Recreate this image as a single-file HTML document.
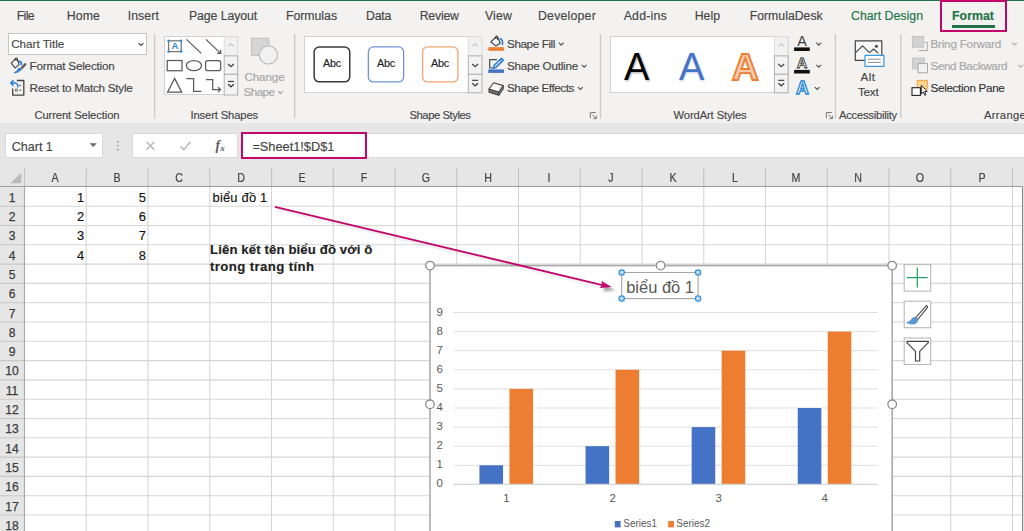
<!DOCTYPE html>
<html lang="vi"><head><meta charset="utf-8"><title>Excel - Chart title linked to cell</title>
<style>
html,body{margin:0;padding:0;}
body{width:1024px;height:531px;overflow:hidden;background:#f3f2f1;font-family:"Liberation Sans", sans-serif;}
#app{position:relative;width:1024px;height:531px;overflow:hidden;background:#f3f2f1;}
.t{position:absolute;white-space:nowrap;line-height:16px;height:16px;font-family:"Liberation Sans", sans-serif;-webkit-text-stroke:0.15px currentColor;}
.abs{position:absolute;}
svg{position:absolute;left:0;top:0;overflow:visible;}
</style></head><body><div id="app">
<div class="abs" style="left:0.00px;top:123.00px;width:1024.00px;height:63.50px;box-sizing:border-box;background:#e6e6e6;"></div>
<div class="abs" style="left:0.00px;top:121.00px;width:1024.00px;height:3.00px;box-sizing:border-box;background:linear-gradient(#f3f2f1,#efefef 45%,#e6e6e6);"></div>
<div class="abs" style="left:0.00px;top:0.00px;width:1024.00px;height:1.00px;box-sizing:border-box;background:#217346;"></div>
<div class="abs" style="left:5.00px;top:133.00px;width:97.70px;height:25.00px;box-sizing:border-box;background:#fff;border:1px solid #d9d9d9;"></div>
<div class="abs" style="left:132.20px;top:133.00px;width:105.60px;height:25.00px;box-sizing:border-box;background:#fff;border:1px solid #d9d9d9;"></div>
<div class="abs" style="left:241.00px;top:133.00px;width:783.00px;height:25.00px;box-sizing:border-box;background:#fff;border-top:1px solid #d9d9d9;border-bottom:1px solid #d9d9d9;"></div>
<div class="abs" style="left:241.40px;top:132.00px;width:125.40px;height:27.00px;box-sizing:border-box;background:#fff;border:2px solid #c4066b;"></div>
<div class="abs" style="left:940.10px;top:0.00px;width:66.70px;height:31.80px;box-sizing:border-box;border:2px solid #c4066b;"></div>
<div class="abs" style="left:952.00px;top:25.00px;width:42.80px;height:2.90px;box-sizing:border-box;background:#217346;"></div>
<div class="abs" style="left:8.20px;top:33.30px;width:139.00px;height:21.60px;box-sizing:border-box;background:#fff;border:1px solid #c6c6c6;"></div>
<div class="abs" style="left:164.40px;top:36.20px;width:73.80px;height:59.30px;box-sizing:border-box;background:#fff;border:1px solid #d2d2d2;"></div>
<div class="abs" style="left:304.20px;top:36.20px;width:178.30px;height:57.10px;box-sizing:border-box;background:#fff;border:1px solid #d2d2d2;"></div>
<div class="abs" style="left:610.20px;top:36.20px;width:178.40px;height:57.10px;box-sizing:border-box;background:#fff;border:1px solid #d2d2d2;"></div>
<svg width="1024" height="124" viewBox="0 0 1024 124"><path d="M154.6 34 V118.6" stroke="#cbcbcb" stroke-width="1.4" fill="none"/></svg>
<svg width="1024" height="124" viewBox="0 0 1024 124"><path d="M294.7 34 V118.6" stroke="#cbcbcb" stroke-width="1.4" fill="none"/></svg>
<svg width="1024" height="124" viewBox="0 0 1024 124"><path d="M600.5 34 V118.6" stroke="#cbcbcb" stroke-width="1.4" fill="none"/></svg>
<svg width="1024" height="124" viewBox="0 0 1024 124"><path d="M835.4 34 V118.6" stroke="#cbcbcb" stroke-width="1.4" fill="none"/></svg>
<svg width="1024" height="124" viewBox="0 0 1024 124"><path d="M900.8 34 V118.6" stroke="#cbcbcb" stroke-width="1.4" fill="none"/></svg>
<svg width="1024" height="190" viewBox="0 0 1024 190">
<path d="M138.60 43.10 L141.00 45.50 L143.40 43.10" fill="none" stroke="#444" stroke-width="1.2"/>
<g fill="none" stroke-linejoin="round" stroke-linecap="round"><path d="M11.3 63.4 L14.9 59.1 L17.9 60.3 L19.1 64.6 L15.2 67.9 Z" stroke="#444" stroke-width="1.2" fill="#fbfbfb"/><path d="M15.5 60 V58.4 Q16.4 57.5 17.3 58.4 V61" stroke="#444" stroke-width="1.1"/><path d="M19.5 61.2 Q22 62 21.4 64.6" stroke="#2b7cd3" stroke-width="1.7"/><path d="M25.3 64.3 L21.2 68.6" stroke="#555" stroke-width="2.3"/><path d="M21.4 68.4 L20.2 69.7" stroke="#8a8a8a" stroke-width="2.3"/><path d="M20.9 69.6 Q19.4 72.4 14.1 72.9 Q17.6 71.6 18.6 68.6 Z" fill="#2b7cd3" stroke="#2b7cd3" stroke-width="1"/></g>
<g fill="none" stroke-linejoin="round"><path d="M16.8 80.5 H23.8 V95.2 H12.7 V88.4" stroke="#444" stroke-width="1.3"/><rect x="15.5" y="89.1" width="1.9" height="2.1" stroke="#666" stroke-width="0.9"/><path d="M19 85.3 H21.3 M19 90.2 H21.3" stroke="#666" stroke-width="1"/><path d="M11 83.1 H15 Q18 83.3 18 87.6" stroke="#2b7cd3" stroke-width="1.5"/><path d="M13.5 80.4 L10.8 83.1 L13.5 85.8" stroke="#2b7cd3" stroke-width="1.5"/></g>
<g fill="none" stroke="#5a5a5a" stroke-width="1.25"><rect x="168.6" y="40.8" width="12.6" height="10.8" stroke="#7a7a7a" stroke-width="1.3"/><path d="M186.4 39.4 L201.3 53.4"/><path d="M205.9 39.4 L220.4 53.1"/><path d="M217.2 53.4 H220.7 V49.8" /><rect x="167.2" y="60.5" width="14.8" height="10.2"/><ellipse cx="193.9" cy="65.6" rx="7.6" ry="5.1"/><rect x="205.6" y="60.5" width="15.1" height="10.2" rx="2.2"/><path d="M174.6 78.4 L181.7 92.1 H167.6 Z"/><path d="M186.4 78.6 H193.6 V91.3 H201.4"/><path d="M205.9 79.6 H212.7 V89.6 H220"/><path d="M218 87.2 L220.6 89.6 L218 92"/></g>
<circle cx="168.6" cy="40.8" r="1.25" fill="#2b8ad8"/>
<circle cx="181.2" cy="40.8" r="1.25" fill="#2b8ad8"/>
<circle cx="168.6" cy="51.6" r="1.25" fill="#2b8ad8"/>
<circle cx="181.2" cy="51.6" r="1.25" fill="#2b8ad8"/>
<text x="174.9" y="49.3" font-family="Liberation Sans, sans-serif" font-size="9.6" font-weight="700" fill="#2b8ad8" text-anchor="middle">A</text>
<rect x="224.20" y="36.70" width="13.50" height="19.20" fill="#f1f1f1" stroke="#dcdcdc" stroke-width="1"/>
<rect x="224.20" y="55.90" width="13.50" height="18.40" fill="#f3f3f3" stroke="#b2b2b2" stroke-width="1"/>
<rect x="224.20" y="74.30" width="13.50" height="20.70" fill="#f3f3f3" stroke="#b2b2b2" stroke-width="1"/>
<path d="M228.05 46.20 L230.95 43.70 L233.85 46.20" fill="none" stroke="#c6c6c6" stroke-width="1.2"/>
<path d="M228.05 64.10 L230.95 66.70 L233.85 64.10" fill="none" stroke="#444" stroke-width="1.35"/>
<path d="M227.95 81.45 H233.95" stroke="#444" stroke-width="1.2"/>
<path d="M228.05 84.25 L230.95 86.85 L233.85 84.25" fill="none" stroke="#444" stroke-width="1.35"/>
<rect x="251.4" y="38.3" width="17.6" height="17.3" fill="#d6d6d6" stroke="#c0c0c0" stroke-width="1"/>
<circle cx="268.4" cy="54.9" r="9.1" fill="#f1f1f1" stroke="#bdbdbd" stroke-width="1.2"/>
<path d="M278.10 91.25 L280.40 93.55 L282.70 91.25" fill="none" stroke="#a6a6a6" stroke-width="1.2"/>
<rect x="314.15" y="47.05" width="35.60" height="34.80" rx="5" fill="#fff" stroke="#3a3a3a" stroke-width="1.5"/>
<rect x="368.35" y="46.95" width="35.30" height="35.00" rx="5" fill="#fff" stroke="#6e95d8" stroke-width="1.3"/>
<rect x="422.55" y="46.95" width="35.40" height="35.00" rx="5" fill="#fff" stroke="#f0a570" stroke-width="1.3"/>
<rect x="468.30" y="36.70" width="13.70" height="19.20" fill="#f1f1f1" stroke="#dcdcdc" stroke-width="1"/>
<rect x="468.30" y="55.90" width="13.70" height="18.40" fill="#f3f3f3" stroke="#b2b2b2" stroke-width="1"/>
<rect x="468.30" y="74.30" width="13.70" height="18.50" fill="#f3f3f3" stroke="#b2b2b2" stroke-width="1"/>
<path d="M472.25 46.20 L475.15 43.70 L478.05 46.20" fill="none" stroke="#c6c6c6" stroke-width="1.2"/>
<path d="M472.25 64.10 L475.15 66.70 L478.05 64.10" fill="none" stroke="#444" stroke-width="1.35"/>
<path d="M472.15 80.35 H478.15" stroke="#444" stroke-width="1.2"/>
<path d="M472.25 83.15 L475.15 85.75 L478.05 83.15" fill="none" stroke="#444" stroke-width="1.35"/>
<rect x="488.3" y="47.2" width="15.6" height="3.6" fill="#ed7d31"/>
<g fill="none" stroke-linejoin="round" stroke-linecap="round"><path d="M490.9 42 L495.2 37.7 L498.3 38.4 L500.1 43.2 L495.8 45.9 Z" stroke="#444" stroke-width="1.2" fill="#fbfbfb"/><path d="M495.7 38.4 V36.6 Q496.7 35.6 497.7 36.6 V39.4" stroke="#444" stroke-width="1.1"/><path d="M500.4 38.8 Q503.2 40.2 502.4 44.4" stroke="#2b7cd3" stroke-width="1.6"/></g>
<path d="M558.80 42.70 L561.20 45.10 L563.60 42.70" fill="none" stroke="#555" stroke-width="1.2"/>
<rect x="488.3" y="69.4" width="15.6" height="3.5" fill="#4472c4"/>
<g fill="none" stroke-linejoin="round" stroke-linecap="round"><path d="M496.6 59.7 H489.7 V68 H492.6" stroke="#444" stroke-width="1.2"/><path d="M501.4 58.2 L503.3 60.1 L496.2 67.2 L493.2 68.2 L494.2 65.2 Z" stroke="#2b7cd3" stroke-width="1.5" fill="#cfe3f7"/><path d="M499.7 59.9 L501.6 61.8" stroke="#2b7cd3" stroke-width="1"/></g>
<path d="M581.80 64.80 L584.20 67.20 L586.60 64.80" fill="none" stroke="#555" stroke-width="1.2"/>
<g stroke-linejoin="round"><path d="M489 89 L498.8 92 V95.3 L489 92.3 Z" fill="#6f6f6f" stroke="#444" stroke-width="1.1"/><path d="M498.8 92 L503.2 85.6 V88.9 L498.8 95.3 Z" fill="#a8a8a8" stroke="#444" stroke-width="1.1"/><path d="M489 89 L493.6 82.7 L503.2 85.6 L498.8 92 Z" fill="#fbfbfb" stroke="#444" stroke-width="1.1"/></g>
<path d="M578.00 87.10 L580.40 89.50 L582.80 87.10" fill="none" stroke="#555" stroke-width="1.2"/>
<path d="M595.80 112.60 H590.30 V118.10" fill="none" stroke="#777" stroke-width="1"/><path d="M592.50 114.80 L596.30 118.60 M596.30 115.60 V118.60 H593.30" fill="none" stroke="#777" stroke-width="1"/>
<defs><filter id="ws" x="-20%" y="-20%" width="140%" height="150%"><feGaussianBlur stdDeviation="0.9"/></filter></defs>
<text x="637.6" y="81.2" font-family="Liberation Sans, sans-serif" font-size="38" fill="#000" opacity="0.35" text-anchor="middle" filter="url(#ws)">A</text>
<text x="636.8" y="79.9" font-family="Liberation Sans, sans-serif" font-size="38" fill="#000" text-anchor="middle">A</text>
<text x="692.2" y="81.2" font-family="Liberation Sans, sans-serif" font-size="38" fill="#4472c4" opacity="0.35" text-anchor="middle" filter="url(#ws)">A</text>
<text x="691.6" y="79.9" font-family="Liberation Sans, sans-serif" font-size="38" fill="#4472c4" text-anchor="middle">A</text>
<text x="745.4" y="79.8" font-family="Liberation Sans, sans-serif" font-size="37.5" font-weight="700" fill="#f8cbad" stroke="#ed7d31" stroke-width="1.8" text-anchor="middle">A</text>
<rect x="774.40" y="36.70" width="13.70" height="19.20" fill="#f1f1f1" stroke="#dcdcdc" stroke-width="1"/>
<rect x="774.40" y="55.90" width="13.70" height="18.40" fill="#f3f3f3" stroke="#b2b2b2" stroke-width="1"/>
<rect x="774.40" y="74.30" width="13.70" height="18.50" fill="#f3f3f3" stroke="#b2b2b2" stroke-width="1"/>
<path d="M778.35 46.20 L781.25 43.70 L784.15 46.20" fill="none" stroke="#c6c6c6" stroke-width="1.2"/>
<path d="M778.35 64.10 L781.25 66.70 L784.15 64.10" fill="none" stroke="#444" stroke-width="1.35"/>
<path d="M778.25 80.35 H784.25" stroke="#444" stroke-width="1.2"/>
<path d="M778.35 83.15 L781.25 85.75 L784.15 83.15" fill="none" stroke="#444" stroke-width="1.35"/>
<rect x="794.1" y="47.4" width="15.7" height="3.6" fill="#111"/>
<text x="802.1" y="46.0" font-family="Liberation Sans, sans-serif" font-size="14.3" fill="#3c3c3c" text-anchor="middle">A</text>
<path d="M816.40 42.70 L818.80 45.10 L821.20 42.70" fill="none" stroke="#555" stroke-width="1.2"/>
<rect x="794.1" y="69.9" width="15.7" height="3.6" fill="#111"/>
<text x="802.1" y="68.3" font-family="Liberation Sans, sans-serif" font-size="14.6" font-weight="700" fill="#f8f8f8" stroke="#333" stroke-width="0.85" text-anchor="middle">A</text>
<path d="M816.40 64.80 L818.80 67.20 L821.20 64.80" fill="none" stroke="#555" stroke-width="1.2"/>
<text x="802.3" y="93.6" font-family="Liberation Sans, sans-serif" font-size="17.8" font-weight="700" fill="#fff" stroke="#2b8ad8" stroke-width="1.35" text-anchor="middle">A</text>
<path d="M814.80 87.10 L817.20 89.50 L819.60 87.10" fill="none" stroke="#555" stroke-width="1.2"/>
<path d="M831.90 112.60 H826.40 V118.10" fill="none" stroke="#777" stroke-width="1"/><path d="M828.60 114.80 L832.40 118.60 M832.40 115.60 V118.60 H829.40" fill="none" stroke="#777" stroke-width="1"/>
<g fill="none" stroke-linejoin="round"><rect x="855.3" y="40.8" width="26.5" height="19.6" stroke="#444" stroke-width="1.2" fill="#f7f7f7"/><path d="M855.6 52.6 L862.6 45.8 L869.4 52.6 L873.6 49 L878.4 53.4" stroke="#444" stroke-width="1.1"/><circle cx="876.4" cy="46.2" r="1.5" fill="#444"/><rect x="865" y="55.4" width="18.9" height="11" fill="#fff" stroke="#3a96dd" stroke-width="1.2"/><path d="M867.8 59.2 H880.8 M867.8 62.4 H880.8" stroke="#8a8a8a" stroke-width="1"/></g>
<g stroke-linejoin="miter"><path d="M918.6 50.6 H927.4 V42.4 H924.6" fill="none" stroke="#a8a8a8" stroke-width="1"/><rect x="912.4" y="36.4" width="11.2" height="10.8" fill="#d2d2d2" stroke="#c4c4c4" stroke-width="1"/><rect x="912.4" y="58.1" width="11.9" height="10.8" fill="#d2d2d2" stroke="#c4c4c4" stroke-width="1"/><rect x="918.1" y="63.6" width="9.4" height="9.2" fill="#f1f1f1" stroke="#a8a8a8" stroke-width="1"/><rect x="917.3" y="80.4" width="10" height="8.6" fill="#ffd591" stroke="#f2a33a" stroke-width="1"/><rect x="912" y="87.7" width="8.4" height="7.7" fill="#fff" stroke="#222" stroke-width="1.1"/><path d="M921.3 85.4 V94 L923.3 92.1 L924.8 95.3 L926 94.7 L924.6 91.6 L927.2 91.4 Z" fill="#fff" stroke="#111" stroke-width="0.9"/></g>
<path d="M1012.10 42.60 L1014.50 45.00 L1016.90 42.60" fill="none" stroke="#b0b0b0" stroke-width="1.2"/>
<path d="M1018.20 64.80 L1020.60 67.20 L1023.00 64.80" fill="none" stroke="#b0b0b0" stroke-width="1.2"/>
<path d="M89.5 143.2 H96.9 L93.2 147 Z" fill="#6a6a6a"/>
<circle cx="117.9" cy="141.6" r="0.9" fill="#949494"/>
<circle cx="117.9" cy="145.6" r="0.9" fill="#949494"/>
<circle cx="117.9" cy="149.6" r="0.9" fill="#949494"/>
<path d="M146.6 142 L154.2 149.6 M154.2 142 L146.6 149.6" stroke="#bcbcbc" stroke-width="1.6" fill="none"/>
<path d="M180.6 146.4 L183.8 149.8 L190.4 141.8" stroke="#bcbcbc" stroke-width="1.7" fill="none"/>
<text x="215.6" y="150.4" font-family="Liberation Serif, serif" font-size="13.6" font-style="italic" font-weight="700" fill="#5a5a5a">f</text>
<text x="220.2" y="151.2" font-family="Liberation Serif, serif" font-size="9" font-style="italic" font-weight="700" fill="#5a5a5a">x</text>
</svg>
<svg width="1024" height="531" viewBox="0 0 1024 531">
<rect x="24.5" y="186.5" width="998.0" height="344.5" fill="#fff"/>
<rect x="1022.5" y="168" width="1.5" height="363" fill="#e6e6e6"/>
<path d="M1022.5 186 V531" stroke="#8a8a8a" stroke-width="1.1"/>
<rect x="0" y="186.5" width="24.5" height="344.5" fill="#e6e6e6"/>
<path d="M24.5 206.20 H1022 M24.5 225.50 H1022 M24.5 244.80 H1022 M24.5 264.10 H1022 M24.5 283.40 H1022 M24.5 302.70 H1022 M24.5 322.00 H1022 M24.5 341.30 H1022 M24.5 360.60 H1022 M24.5 379.90 H1022 M24.5 399.20 H1022 M24.5 418.50 H1022 M24.5 437.80 H1022 M24.5 457.10 H1022 M24.5 476.40 H1022 M24.5 495.70 H1022 M24.5 515.00 H1022 M24.5 534.30 H1022 M86.25 186.5 V531 M148.00 186.5 V531 M209.75 186.5 V531 M271.50 186.5 V531 M333.25 186.5 V531 M395.00 186.5 V531 M456.75 186.5 V531 M518.50 186.5 V531 M580.25 186.5 V531 M642.00 186.5 V531 M703.75 186.5 V531 M765.50 186.5 V531 M827.25 186.5 V531 M889.00 186.5 V531 M950.75 186.5 V531 M1012.50 186.5 V531" stroke="#d6d6d6" stroke-width="1.1" fill="none"/>
<path d="M24.50 168.2 V186.5 M86.25 168.2 V186.5 M148.00 168.2 V186.5 M209.75 168.2 V186.5 M271.50 168.2 V186.5 M333.25 168.2 V186.5 M395.00 168.2 V186.5 M456.75 168.2 V186.5 M518.50 168.2 V186.5 M580.25 168.2 V186.5 M642.00 168.2 V186.5 M703.75 168.2 V186.5 M765.50 168.2 V186.5 M827.25 168.2 V186.5 M889.00 168.2 V186.5 M950.75 168.2 V186.5 M1012.50 168.2 V186.5" stroke="#c2c2c2" stroke-width="1.1" fill="none"/>
<path d="M0 206.20 H24.5 M0 225.50 H24.5 M0 244.80 H24.5 M0 264.10 H24.5 M0 283.40 H24.5 M0 302.70 H24.5 M0 322.00 H24.5 M0 341.30 H24.5 M0 360.60 H24.5 M0 379.90 H24.5 M0 399.20 H24.5 M0 418.50 H24.5 M0 437.80 H24.5 M0 457.10 H24.5 M0 476.40 H24.5 M0 495.70 H24.5 M0 515.00 H24.5 M0 534.30 H24.5" stroke="#c8c8c8" stroke-width="1.1" fill="none"/>
<path d="M0 186.5 H1023" stroke="#9c9c9c" stroke-width="1.2" fill="none"/>
<path d="M24.5 186.5 V531" stroke="#a9a9a9" stroke-width="1.2" fill="none"/>
<path d="M21.3 172.8 V183.2 H10.4 Z" fill="#b9b9b9"/>
</svg>
<span class="t" style="left:16.70px;top:7.94px;font-size:12.3px;color:#444;letter-spacing:-0.632px;">File</span>
<span class="t" style="left:66.70px;top:7.94px;font-size:12.3px;color:#444;letter-spacing:0.122px;">Home</span>
<span class="t" style="left:127.70px;top:7.94px;font-size:12.3px;color:#444;letter-spacing:0.089px;">Insert</span>
<span class="t" style="left:189.00px;top:7.94px;font-size:12.3px;color:#444;letter-spacing:-0.097px;">Page Layout</span>
<span class="t" style="left:286.00px;top:7.94px;font-size:12.3px;color:#444;letter-spacing:-0.031px;">Formulas</span>
<span class="t" style="left:366.00px;top:7.94px;font-size:12.3px;color:#444;letter-spacing:-0.246px;">Data</span>
<span class="t" style="left:419.70px;top:7.94px;font-size:12.3px;color:#444;letter-spacing:-0.221px;">Review</span>
<span class="t" style="left:485.00px;top:7.94px;font-size:12.3px;color:#444;letter-spacing:0.141px;">View</span>
<span class="t" style="left:538.00px;top:7.94px;font-size:12.3px;color:#444;letter-spacing:0.215px;">Developer</span>
<span class="t" style="left:623.70px;top:7.94px;font-size:12.3px;color:#444;letter-spacing:0.228px;">Add-ins</span>
<span class="t" style="left:694.70px;top:7.94px;font-size:12.3px;color:#444;letter-spacing:0.001px;">Help</span>
<span class="t" style="left:749.70px;top:7.94px;font-size:12.3px;color:#444;letter-spacing:-0.011px;">FormulaDesk</span>
<span class="t" style="left:851.00px;top:7.94px;font-size:12.3px;color:#217346;letter-spacing:0.020px;">Chart Design</span>
<span class="t" style="left:952.00px;top:7.94px;font-size:12.3px;color:#217346;font-weight:700;letter-spacing:0.052px;">Format</span>
<span class="t" style="left:11.20px;top:35.85px;font-size:11.7px;color:#444;letter-spacing:-0.024px;">Chart Title</span>
<span class="t" style="left:29.60px;top:57.85px;font-size:11.7px;color:#444;letter-spacing:-0.215px;">Format Selection</span>
<span class="t" style="left:29.60px;top:79.85px;font-size:11.7px;color:#444;letter-spacing:-0.247px;">Reset to Match Style</span>
<span class="t" style="left:34.40px;top:106.72px;font-size:11.2px;color:#444;letter-spacing:-0.079px;">Current Selection</span>
<span class="t" style="left:190.50px;top:106.72px;font-size:11.2px;color:#444;letter-spacing:-0.119px;">Insert Shapes</span>
<span class="t" style="left:244.50px;top:68.75px;font-size:11.7px;color:#a6a6a6;letter-spacing:-0.159px;">Change</span>
<span class="t" style="left:243.50px;top:84.25px;font-size:11.7px;color:#a6a6a6;letter-spacing:-0.559px;">Shape</span>
<span class="t" style="left:323.00px;top:55.26px;font-size:10.8px;color:#222;letter-spacing:-0.203px;">Abc</span>
<span class="t" style="left:377.00px;top:55.26px;font-size:10.8px;color:#222;letter-spacing:-0.203px;">Abc</span>
<span class="t" style="left:431.00px;top:55.26px;font-size:10.8px;color:#222;letter-spacing:-0.203px;">Abc</span>
<span class="t" style="left:507.00px;top:35.85px;font-size:11.7px;color:#444;letter-spacing:-0.398px;">Shape Fill</span>
<span class="t" style="left:507.00px;top:57.85px;font-size:11.7px;color:#444;letter-spacing:-0.237px;">Shape Outline</span>
<span class="t" style="left:507.00px;top:79.85px;font-size:11.7px;color:#444;letter-spacing:-0.428px;">Shape Effects</span>
<span class="t" style="left:409.50px;top:106.72px;font-size:11.2px;color:#444;letter-spacing:-0.411px;">Shape Styles</span>
<span class="t" style="left:673.50px;top:106.72px;font-size:11.2px;color:#444;letter-spacing:-0.100px;">WordArt Styles</span>
<span class="t" style="left:860.50px;top:68.75px;font-size:11.7px;color:#444;letter-spacing:0.453px;">Alt</span>
<span class="t" style="left:858.00px;top:84.25px;font-size:11.7px;color:#444;letter-spacing:-0.234px;">Text</span>
<span class="t" style="left:839.00px;top:106.72px;font-size:11.2px;color:#444;letter-spacing:-0.226px;">Accessibility</span>
<span class="t" style="left:930.50px;top:35.85px;font-size:11.7px;color:#a6a6a6;letter-spacing:-0.224px;">Bring Forward</span>
<span class="t" style="left:930.50px;top:57.85px;font-size:11.7px;color:#a6a6a6;letter-spacing:-0.412px;">Send Backward</span>
<span class="t" style="left:930.50px;top:79.85px;font-size:11.7px;color:#333;letter-spacing:-0.330px;">Selection Pane</span>
<span class="t" style="left:984.00px;top:106.72px;font-size:11.2px;color:#444;letter-spacing:0.312px;">Arrange</span>
<span class="t" style="left:11.80px;top:138.63px;font-size:12.6px;color:#444;letter-spacing:-0.045px;">Chart 1</span>
<span class="t" style="left:252.40px;top:138.86px;font-size:12.8px;color:#444;letter-spacing:-0.016px;">=Sheet1!$D$1</span>
<span class="t" style="left:45.38px;width:20.00px;text-align:center;top:169.81px;font-size:12.1px;color:#444;transform:scaleX(.88);-webkit-text-stroke:0.2px #444;">A</span>
<span class="t" style="left:107.12px;width:20.00px;text-align:center;top:169.81px;font-size:12.1px;color:#444;transform:scaleX(.88);-webkit-text-stroke:0.2px #444;">B</span>
<span class="t" style="left:168.88px;width:20.00px;text-align:center;top:169.81px;font-size:12.1px;color:#444;transform:scaleX(.88);-webkit-text-stroke:0.2px #444;">C</span>
<span class="t" style="left:230.62px;width:20.00px;text-align:center;top:169.81px;font-size:12.1px;color:#444;transform:scaleX(.88);-webkit-text-stroke:0.2px #444;">D</span>
<span class="t" style="left:292.38px;width:20.00px;text-align:center;top:169.81px;font-size:12.1px;color:#444;transform:scaleX(.88);-webkit-text-stroke:0.2px #444;">E</span>
<span class="t" style="left:354.12px;width:20.00px;text-align:center;top:169.81px;font-size:12.1px;color:#444;transform:scaleX(.88);-webkit-text-stroke:0.2px #444;">F</span>
<span class="t" style="left:415.88px;width:20.00px;text-align:center;top:169.81px;font-size:12.1px;color:#444;transform:scaleX(.88);-webkit-text-stroke:0.2px #444;">G</span>
<span class="t" style="left:477.62px;width:20.00px;text-align:center;top:169.81px;font-size:12.1px;color:#444;transform:scaleX(.88);-webkit-text-stroke:0.2px #444;">H</span>
<span class="t" style="left:539.38px;width:20.00px;text-align:center;top:169.81px;font-size:12.1px;color:#444;transform:scaleX(.88);-webkit-text-stroke:0.2px #444;">I</span>
<span class="t" style="left:601.12px;width:20.00px;text-align:center;top:169.81px;font-size:12.1px;color:#444;transform:scaleX(.88);-webkit-text-stroke:0.2px #444;">J</span>
<span class="t" style="left:662.88px;width:20.00px;text-align:center;top:169.81px;font-size:12.1px;color:#444;transform:scaleX(.88);-webkit-text-stroke:0.2px #444;">K</span>
<span class="t" style="left:724.62px;width:20.00px;text-align:center;top:169.81px;font-size:12.1px;color:#444;transform:scaleX(.88);-webkit-text-stroke:0.2px #444;">L</span>
<span class="t" style="left:786.38px;width:20.00px;text-align:center;top:169.81px;font-size:12.1px;color:#444;transform:scaleX(.88);-webkit-text-stroke:0.2px #444;">M</span>
<span class="t" style="left:848.12px;width:20.00px;text-align:center;top:169.81px;font-size:12.1px;color:#444;transform:scaleX(.88);-webkit-text-stroke:0.2px #444;">N</span>
<span class="t" style="left:909.88px;width:20.00px;text-align:center;top:169.81px;font-size:12.1px;color:#444;transform:scaleX(.88);-webkit-text-stroke:0.2px #444;">O</span>
<span class="t" style="left:971.62px;width:20.00px;text-align:center;top:169.81px;font-size:12.1px;color:#444;transform:scaleX(.88);-webkit-text-stroke:0.2px #444;">P</span>
<span class="t" style="left:1.50px;width:21.00px;text-align:center;top:189.71px;font-size:12.1px;color:#3c3c3c;-webkit-text-stroke:0.25px #3c3c3c;">1</span>
<span class="t" style="left:1.50px;width:21.00px;text-align:center;top:209.01px;font-size:12.1px;color:#3c3c3c;-webkit-text-stroke:0.25px #3c3c3c;">2</span>
<span class="t" style="left:1.50px;width:21.00px;text-align:center;top:228.31px;font-size:12.1px;color:#3c3c3c;-webkit-text-stroke:0.25px #3c3c3c;">3</span>
<span class="t" style="left:1.50px;width:21.00px;text-align:center;top:247.61px;font-size:12.1px;color:#3c3c3c;-webkit-text-stroke:0.25px #3c3c3c;">4</span>
<span class="t" style="left:1.50px;width:21.00px;text-align:center;top:266.91px;font-size:12.1px;color:#3c3c3c;-webkit-text-stroke:0.25px #3c3c3c;">5</span>
<span class="t" style="left:1.50px;width:21.00px;text-align:center;top:286.21px;font-size:12.1px;color:#3c3c3c;-webkit-text-stroke:0.25px #3c3c3c;">6</span>
<span class="t" style="left:1.50px;width:21.00px;text-align:center;top:305.51px;font-size:12.1px;color:#3c3c3c;-webkit-text-stroke:0.25px #3c3c3c;">7</span>
<span class="t" style="left:1.50px;width:21.00px;text-align:center;top:324.81px;font-size:12.1px;color:#3c3c3c;-webkit-text-stroke:0.25px #3c3c3c;">8</span>
<span class="t" style="left:1.50px;width:21.00px;text-align:center;top:344.11px;font-size:12.1px;color:#3c3c3c;-webkit-text-stroke:0.25px #3c3c3c;">9</span>
<span class="t" style="left:1.50px;width:21.00px;text-align:center;top:363.41px;font-size:12.1px;color:#3c3c3c;-webkit-text-stroke:0.25px #3c3c3c;">10</span>
<span class="t" style="left:1.50px;width:21.00px;text-align:center;top:382.71px;font-size:12.1px;color:#3c3c3c;-webkit-text-stroke:0.25px #3c3c3c;">11</span>
<span class="t" style="left:1.50px;width:21.00px;text-align:center;top:402.01px;font-size:12.1px;color:#3c3c3c;-webkit-text-stroke:0.25px #3c3c3c;">12</span>
<span class="t" style="left:1.50px;width:21.00px;text-align:center;top:421.31px;font-size:12.1px;color:#3c3c3c;-webkit-text-stroke:0.25px #3c3c3c;">13</span>
<span class="t" style="left:1.50px;width:21.00px;text-align:center;top:440.61px;font-size:12.1px;color:#3c3c3c;-webkit-text-stroke:0.25px #3c3c3c;">14</span>
<span class="t" style="left:1.50px;width:21.00px;text-align:center;top:459.91px;font-size:12.1px;color:#3c3c3c;-webkit-text-stroke:0.25px #3c3c3c;">15</span>
<span class="t" style="left:1.50px;width:21.00px;text-align:center;top:479.21px;font-size:12.1px;color:#3c3c3c;-webkit-text-stroke:0.25px #3c3c3c;">16</span>
<span class="t" style="left:1.50px;width:21.00px;text-align:center;top:498.51px;font-size:12.1px;color:#3c3c3c;-webkit-text-stroke:0.25px #3c3c3c;">17</span>
<span class="t" style="left:1.50px;width:21.00px;text-align:center;top:517.81px;font-size:12.1px;color:#3c3c3c;-webkit-text-stroke:0.25px #3c3c3c;">18</span>
<span class="t" style="left:60.00px;width:24.20px;text-align:right;top:189.63px;font-size:12.9px;color:#111;">1</span>
<span class="t" style="left:120.00px;width:26.00px;text-align:right;top:189.63px;font-size:12.9px;color:#111;">5</span>
<span class="t" style="left:60.00px;width:24.20px;text-align:right;top:208.93px;font-size:12.9px;color:#111;">2</span>
<span class="t" style="left:120.00px;width:26.00px;text-align:right;top:208.93px;font-size:12.9px;color:#111;">6</span>
<span class="t" style="left:60.00px;width:24.20px;text-align:right;top:228.23px;font-size:12.9px;color:#111;">3</span>
<span class="t" style="left:120.00px;width:26.00px;text-align:right;top:228.23px;font-size:12.9px;color:#111;">7</span>
<span class="t" style="left:60.00px;width:24.20px;text-align:right;top:247.53px;font-size:12.9px;color:#111;">4</span>
<span class="t" style="left:120.00px;width:26.00px;text-align:right;top:247.53px;font-size:12.9px;color:#111;">8</span>
<span class="t" style="left:212.50px;top:189.53px;font-size:12.9px;color:#111;letter-spacing:0.217px;">biểu đồ 1</span>
<span class="t" style="left:210.00px;top:241.73px;font-size:13.2px;color:#222;font-weight:700;letter-spacing:0.112px;">Liên kết tên biểu đồ với ô</span>
<span class="t" style="left:210.00px;top:258.73px;font-size:13.2px;color:#222;font-weight:700;letter-spacing:0.396px;">trong trang tính</span>
<svg width="1024" height="531" viewBox="0 0 1024 531">
<rect x="430" y="265.6" width="462.20000000000005" height="270.4" fill="#fff" stroke="#ababab" stroke-width="1.6"/>
<path d="M453.2 465.30 H877.6 M453.2 446.20 H877.6 M453.2 427.10 H877.6 M453.2 408.00 H877.6 M453.2 388.90 H877.6 M453.2 369.80 H877.6 M453.2 350.70 H877.6 M453.2 331.60 H877.6 M453.2 312.50 H877.6" stroke="#dfdfdf" stroke-width="1" fill="none"/>
<rect x="479.45" y="465.30" width="23.6" height="19.10" fill="#4472c4"/>
<rect x="509.45" y="388.90" width="23.6" height="95.50" fill="#ed7d31"/>
<text x="506.45" y="502.2" font-family="Liberation Sans, sans-serif" font-size="11.4" fill="#595959" text-anchor="middle">1</text>
<rect x="585.55" y="446.20" width="23.6" height="38.20" fill="#4472c4"/>
<rect x="615.55" y="369.80" width="23.6" height="114.60" fill="#ed7d31"/>
<text x="612.55" y="502.2" font-family="Liberation Sans, sans-serif" font-size="11.4" fill="#595959" text-anchor="middle">2</text>
<rect x="691.65" y="427.10" width="23.6" height="57.30" fill="#4472c4"/>
<rect x="721.65" y="350.70" width="23.6" height="133.70" fill="#ed7d31"/>
<text x="718.65" y="502.2" font-family="Liberation Sans, sans-serif" font-size="11.4" fill="#595959" text-anchor="middle">3</text>
<rect x="797.75" y="408.00" width="23.6" height="76.40" fill="#4472c4"/>
<rect x="827.75" y="331.60" width="23.6" height="152.80" fill="#ed7d31"/>
<text x="824.75" y="502.2" font-family="Liberation Sans, sans-serif" font-size="11.4" fill="#595959" text-anchor="middle">4</text>
<path d="M453.2 484.4 H877.6" stroke="#d4d4d4" stroke-width="1.2" fill="none"/>
<text x="439.6" y="487.40" font-family="Liberation Sans, sans-serif" font-size="11.4" fill="#595959" text-anchor="middle">0</text>
<text x="439.6" y="468.30" font-family="Liberation Sans, sans-serif" font-size="11.4" fill="#595959" text-anchor="middle">1</text>
<text x="439.6" y="449.20" font-family="Liberation Sans, sans-serif" font-size="11.4" fill="#595959" text-anchor="middle">2</text>
<text x="439.6" y="430.10" font-family="Liberation Sans, sans-serif" font-size="11.4" fill="#595959" text-anchor="middle">3</text>
<text x="439.6" y="411.00" font-family="Liberation Sans, sans-serif" font-size="11.4" fill="#595959" text-anchor="middle">4</text>
<text x="439.6" y="391.90" font-family="Liberation Sans, sans-serif" font-size="11.4" fill="#595959" text-anchor="middle">5</text>
<text x="439.6" y="372.80" font-family="Liberation Sans, sans-serif" font-size="11.4" fill="#595959" text-anchor="middle">6</text>
<text x="439.6" y="353.70" font-family="Liberation Sans, sans-serif" font-size="11.4" fill="#595959" text-anchor="middle">7</text>
<text x="439.6" y="334.60" font-family="Liberation Sans, sans-serif" font-size="11.4" fill="#595959" text-anchor="middle">8</text>
<text x="439.6" y="315.50" font-family="Liberation Sans, sans-serif" font-size="11.4" fill="#595959" text-anchor="middle">9</text>
<rect x="614.8" y="521" width="5.8" height="6.4" fill="#4472c4"/>
<text x="623.3" y="527.2" font-family="Liberation Sans, sans-serif" font-size="11.2" fill="#595959" textLength="33.7" lengthAdjust="spacingAndGlyphs">Series1</text>
<rect x="668.2" y="521" width="5.8" height="6.4" fill="#ed7d31"/>
<text x="676.3" y="527.2" font-family="Liberation Sans, sans-serif" font-size="11.2" fill="#595959" textLength="33.7" lengthAdjust="spacingAndGlyphs">Series2</text>
<rect x="621.7" y="272.5" width="76.4" height="26.1" fill="#fff" stroke="#a6a6a6" stroke-width="1.1"/>
<text x="626.2" y="292.6" font-family="Liberation Sans, sans-serif" font-size="17.4" fill="#595959" textLength="67.8" lengthAdjust="spacingAndGlyphs">biểu đồ 1</text>
<circle cx="621.7" cy="272.5" r="2.7" fill="#b9dbf6" stroke="#3492e0" stroke-width="1.2"/>
<circle cx="698.1" cy="272.5" r="2.7" fill="#b9dbf6" stroke="#3492e0" stroke-width="1.2"/>
<circle cx="621.7" cy="298.6" r="2.7" fill="#b9dbf6" stroke="#3492e0" stroke-width="1.2"/>
<circle cx="698.1" cy="298.6" r="2.7" fill="#b9dbf6" stroke="#3492e0" stroke-width="1.2"/>
<circle cx="430" cy="265.6" r="4.3" fill="#fff" stroke="#8c8c8c" stroke-width="1.3"/>
<circle cx="660.6" cy="265.6" r="4.3" fill="#fff" stroke="#8c8c8c" stroke-width="1.3"/>
<circle cx="892.2" cy="265.6" r="4.3" fill="#fff" stroke="#8c8c8c" stroke-width="1.3"/>
<circle cx="430" cy="404.3" r="4.3" fill="#fff" stroke="#8c8c8c" stroke-width="1.3"/>
<circle cx="892.2" cy="404.3" r="4.3" fill="#fff" stroke="#8c8c8c" stroke-width="1.3"/>
<rect x="904.2" y="264.6" width="26.5" height="26.5" fill="#fff" stroke="#b9b9b9" stroke-width="1.1"/>
<rect x="904.2" y="301.2" width="26.5" height="26.5" fill="#fff" stroke="#b9b9b9" stroke-width="1.1"/>
<rect x="904.2" y="338" width="26.5" height="26.5" fill="#fff" stroke="#b9b9b9" stroke-width="1.1"/>
<path d="M907 277.5 H927.6 M917.3 267.4 V287.6" stroke="#1fa463" stroke-width="1.25" fill="none"/>
<g stroke-linejoin="round" stroke-linecap="round"><path d="M926.4 305.6 Q927.8 306.2 927.4 307.6 L917.6 319.6 L915.4 317.8 Z" fill="#fff" stroke="#555" stroke-width="1.2"/><path d="M915.2 317.6 L917.8 319.8 Q917.6 323.6 913.4 324 Q909.6 324.4 906.8 322.6 Q910.6 321.6 911.4 319.4 Q912.6 317 915.2 317.6 Z" fill="#5b9bd5" stroke="#4a8bc9" stroke-width="0.8"/></g>
<path d="M906.9 341.3 H928.3 V342.6 L919.7 351.4 V361 H915.5 V351.4 L906.9 342.6 Z" fill="#fff" stroke="#444" stroke-width="1.2" stroke-linejoin="round"/>
<defs><filter id="as" x="-10%" y="-50%" width="120%" height="200%"><feGaussianBlur stdDeviation="1.1"/></filter></defs>
<g><path d="M277 209.2 L603 287.4" stroke="#777" stroke-width="1.4" fill="none" opacity="0.25" filter="url(#as)"/><path d="M615 290.4 L603.4 291.6 L605 284.6 Z" fill="#333" opacity="0.42" filter="url(#as)"/><path d="M275 206.8 L602.4 285.1" stroke="#c4066b" stroke-width="1.85" fill="none"/><path d="M611.5 287.1 L599.8 288.1 L602 284.9 L601.5 281 Z" fill="#c4066b"/></g>
</svg>
</div></body></html>
